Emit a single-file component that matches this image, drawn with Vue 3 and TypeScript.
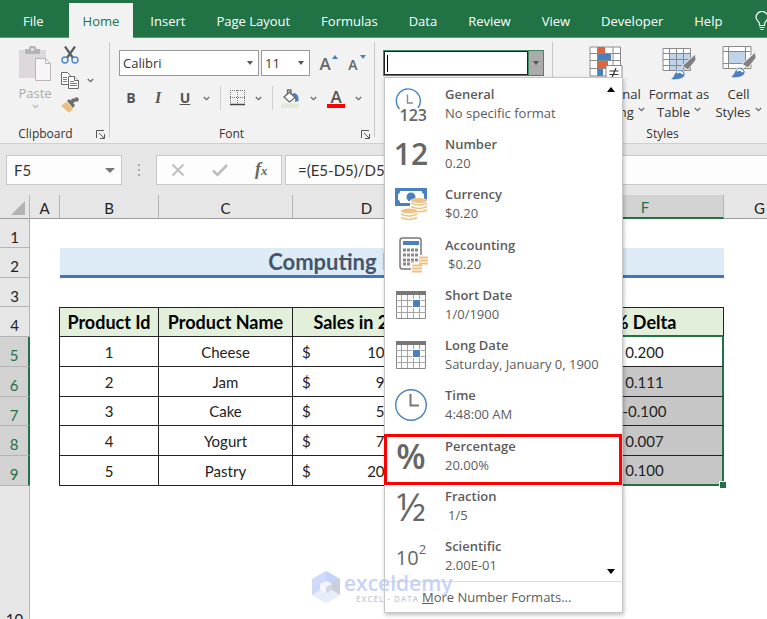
<script setup lang="ts">
interface NumberFormat {
  id: string
  title: string
  sample: string
  indent?: boolean
}

interface ProductRow {
  n: number
  name: string
  before: string
  after: string
  delta: string
  short?: boolean
}

const tabs: string[] = ['File', 'Home', 'Insert', 'Page Layout', 'Formulas', 'Data', 'Review', 'View', 'Developer', 'Help']
const activeTab = 'Home'

const formats: NumberFormat[] = [
  { id: 'general', title: 'General', sample: 'No specific format' },
  { id: 'number', title: 'Number', sample: '0.20' },
  { id: 'currency', title: 'Currency', sample: '$0.20' },
  { id: 'accounting', title: 'Accounting', sample: '$0.20', indent: true },
  { id: 'date', title: 'Short Date', sample: '1/0/1900' },
  { id: 'date', title: 'Long Date', sample: 'Saturday, January 0, 1900' },
  { id: 'time', title: 'Time', sample: '4:48:00 AM' },
  { id: 'percent', title: 'Percentage', sample: '20.00%' },
  { id: 'fraction', title: 'Fraction', sample: '1/5', indent: true },
  { id: 'scientific', title: 'Scientific', sample: '2.00E-01' },
]

const columns: string[] = ['A', 'B', 'C', 'D', 'E', 'F', 'G']

const products: ProductRow[] = [
  { n: 1, name: 'Cheese', before: '10,000.00', after: '12,000.00', delta: '0.200' },
  { n: 2, name: 'Jam', before: '9,000.00', after: '10,000.00', delta: '0.111' },
  { n: 3, name: 'Cake', before: '5,000.00', after: '4,500.00', delta: '-0.100', short: true },
  { n: 4, name: 'Yogurt', before: '7,500.00', after: '7,550.00', delta: '0.007' },
  { n: 5, name: 'Pastry', before: '20,000.00', after: '22,000.00', delta: '0.100' },
]
</script>

<template>
  <div class="app">
    <nav class="tabs" aria-label="Ribbon tabs">
      <button v-for="tab in tabs" :key="tab" type="button" class="tab" :class="{ active: tab === activeTab, file: tab === 'File' }">{{ tab }}</button>
      <button type="button" class="tell-me" aria-label="Tell me">
        <svg width="14" height="20" viewBox="0 0 14 20" fill="none" stroke="#fff" stroke-width="1.2">
          <path d="M4.5 14.5V12.5C4.5 11 1 9.5 1 6.3A6 5.8 0 0 1 13 6.3C13 9.5 9.500 11 9.500 12.500V14.500ZM4.500 16.500H9.500M5.500 18.500H8.500" />
        </svg>
      </button>
    </nav>

    <section class="ribbon">
      <div class="group clipboard">
        <div class="group-body">
          <button type="button" class="paste">
            <svg width="34" height="36" viewBox="0 0 34 36">
              <path d="M1 4H28V32H1Z" fill="#dcd8dc" />
              <path d="M7 8V3H11V1.500Q11 0 13 0H16Q18 0 18 1.500V3H22V8Z" fill="#b4b4b4" />
              <path d="M13 2.500H16V4.500H13Z" fill="#f2f2f2" />
              <path d="M17.500 12.500H27.500L32.500 17.500V34.500H17.500Z" fill="#f7f5f7" stroke="#b9b5b9" />
              <path d="M27.500 12.500V17.500H32.500" fill="none" stroke="#b9b5b9" />
            </svg>
            <span>Paste</span>
            <svg class="chev pale" width="7" height="5" viewBox="0 0 7 5"><path d="M.8 1L3.500 3.700L6.200 1" /></svg>
          </button>
          <div class="clip-tools">
            <button type="button" aria-label="Cut">
              <svg width="18" height="18" viewBox="0 0 18 18" fill="none">
                <path d="M4 .5L12 12M14 .5L6 12" stroke="#5c5c5c" stroke-width="2.200" />
                <circle cx="4" cy="14" r="3" stroke="#4a86c5" stroke-width="1.400" />
                <circle cx="14" cy="14" r="3" stroke="#4a86c5" stroke-width="1.400" />
              </svg>
            </button>
            <button type="button" class="with-chev" aria-label="Copy">
              <svg width="18" height="17" viewBox="0 0 18 17" fill="#fff" stroke="#6a6a6a">
                <path d="M.5.5H6.500L9.500 3.500V12.500H.5Z" />
                <path d="M2 5.500H6M2 7.500H6M2 9.500H6" stroke="#4a86c5" />
                <path d="M7.500 4.500H13.500L17.500 8.500V16.500H7.500Z" />
                <path d="M13.500 4.500V8.500H17.500" />
                <path d="M9 9.500H13M9 11.500H16M9 13.500H16" stroke="#4a86c5" />
              </svg>
              <svg class="chev" width="7" height="5" viewBox="0 0 7 5"><path d="M.8 1L3.500 3.700L6.200 1" /></svg>
            </button>
            <button type="button" aria-label="Format painter">
              <svg width="18" height="17" viewBox="0 0 18 17">
                <path d="M0 8.500L5.500 5L12 11.500L8 16Z" fill="#ecc07c" />
                <path d="M6 4L8 2L14 8L12 11Z" fill="#6e6e6e" />
                <path d="M10 5.500L13.500 2.500" stroke="#6e6e6e" stroke-width="4" />
                <circle cx="15.500" cy="2.500" r="2.300" fill="#6e6e6e" />
              </svg>
            </button>
          </div>
        </div>
        <div class="group-label">Clipboard</div>
        <button type="button" class="launcher" aria-label="Clipboard settings">
          <svg width="9" height="9" viewBox="0 0 9 9" fill="none" stroke="#555"><path d="M.5 8V.5H8M3 3L8 8M8.500 4V8.500H4" /></svg>
        </button>
      </div>

      <div class="group font">
        <div class="font-top">
          <div class="combo family">
            <select aria-label="Font"><option>Calibri</option></select>
            <i class="tri"></i>
          </div>
          <div class="combo size">
            <select aria-label="Font size"><option>11</option></select>
            <i class="tri"></i>
          </div>
          <button type="button" class="grow" aria-label="Increase font size">A<i class="up"></i></button>
          <button type="button" class="grow small" aria-label="Decrease font size">A<i class="down"></i></button>
        </div>
        <div class="font-row">
          <button type="button" class="letter bold">B</button>
          <button type="button" class="letter italic">I</button>
          <button type="button" class="letter under">U</button>
          <svg class="chev" width="7" height="5" viewBox="0 0 7 5"><path d="M.8 1L3.500 3.700L6.200 1" /></svg>
          <i class="sep"></i>
          <button type="button" class="tool" aria-label="Borders">
            <svg width="15" height="16" viewBox="0 0 15 16" fill="none" stroke="#777">
              <path d="M0 .5H15M0 7.500H15M.5 0V14M7.500 0V14M14.500 0V14" stroke-dasharray="1 1" />
              <path d="M0 14.500H15" stroke="#444" stroke-width="1.500" />
            </svg>
            <svg class="chev" width="7" height="5" viewBox="0 0 7 5"><path d="M.8 1L3.500 3.700L6.200 1" /></svg>
          </button>
          <i class="sep"></i>
          <button type="button" class="tool" aria-label="Fill colour">
            <svg width="19" height="19" viewBox="0 0 19 19" fill="none">
              <path d="M0 14.500H18V19H0Z" fill="#dfecd8" />
              <path d="M12 4Q18 4 17.500 12L14 13Q15 8 12 6Z" fill="#4a7ebb" />
              <path d="M8.500 3L14 8.500L8.500 13L3 8Z" fill="#fff" stroke="#6a6a6a" stroke-width="1.300" />
              <path d="M6.500 6V1H10V6" stroke="#6a6a6a" stroke-width="1.300" />
            </svg>
            <svg class="chev" width="7" height="5" viewBox="0 0 7 5"><path d="M.8 1L3.500 3.700L6.200 1" /></svg>
          </button>
          <button type="button" class="tool font-colour" aria-label="Font colour">
            <span>A</span>
            <svg class="chev" width="7" height="5" viewBox="0 0 7 5"><path d="M.8 1L3.500 3.700L6.200 1" /></svg>
          </button>
        </div>
        <div class="group-label">Font</div>
        <button type="button" class="launcher" aria-label="Font settings">
          <svg width="9" height="9" viewBox="0 0 9 9" fill="none" stroke="#555"><path d="M.5 8V.5H8M3 3L8 8M8.500 4V8.500H4" /></svg>
        </button>
      </div>

      <div class="group number">
        <div class="format-box">
          <input type="text" aria-label="Number format" />
          <i class="caret"></i>
          <button type="button" aria-label="Open number formats"><i class="tri"></i></button>

          <div class="menu">
            <i class="scroll-up"></i>
            <ul>
              <li v-for="f in formats" :key="f.title">
                <button type="button" class="format" :class="{ marked: f.id === 'percent' }">
                  <span class="icon" :class="f.id">
                    <template v-if="f.id === 'general'">
                      <svg width="32" height="32" viewBox="0 0 32 32" fill="none">
                        <path d="M4.500 21A12 12 0 1 1 23 20" stroke="#4a86c5" stroke-width="1.400" />
                        <path d="M12.500 6.500V15H18" stroke="#8a8a8a" stroke-width="1.400" />
                      </svg>
                      <b>123</b>
                    </template>
                    <template v-else-if="f.id === 'number'">12</template>
                    <svg v-else-if="f.id === 'currency'" width="33" height="34" viewBox="0 0 33 34">
                      <path d="M0 1H32V19H0Z" fill="#4a80bb" />
                      <path d="M5 4H27Q27 7 29 7V13Q27 13 27 16H5Q5 13 3 13V7Q5 7 5 4Z" fill="#fff" />
                      <circle cx="16" cy="10" r="4.500" fill="#4a80bb" />
                      <path d="M15 13Q24 8 33 13V29H23V34H5V24Q9 20 15 21Z" fill="#fff" />
                      <ellipse cx="24" cy="13.500" rx="8" ry="2.500" fill="#edc283" />
                      <path d="M16 16Q24 20 32 16M16 19.500Q24 23.500 32 19.500M21 24.500Q27 25.500 32 23" fill="none" stroke="#edc283" stroke-width="1.600" />
                      <ellipse cx="14" cy="24" rx="8" ry="2.500" fill="#edc283" />
                      <path d="M6 27Q14 31 22 27M6 30.500Q14 34.500 22 30.500" fill="none" stroke="#edc283" stroke-width="1.600" />
                    </svg>
                    <svg v-else-if="f.id === 'accounting'" width="33" height="36" viewBox="0 0 33 36">
                      <rect x="5" y="1" width="21" height="31" rx="2.500" fill="#fff" stroke="#777" stroke-width="1.500" />
                      <path d="M8 4H24V8H8Z" fill="#4a80bb" />
                      <path d="M8 13H24M8 18H24M8 23H24M8 27H20" stroke="#8a8a8a" stroke-width="3" stroke-dasharray="3 1" />
                      <path d="M23 18H34V30H27V36H16V26H23Z" fill="#fff" />
                      <path d="M24 20.500H34M24 23.500H34M24 26.500H34M17 28.500H27M17 31.500H27M17 34.500H27" stroke="#edc283" stroke-width="2" />
                    </svg>
                    <svg v-else-if="f.id === 'date'" width="30" height="28" viewBox="0 0 30 28" fill="none">
                      <path d="M.5.5H29.500V27.500H.5Z" fill="#fff" stroke="#8a8a8a" />
                      <path d="M0 0H30V4H0Z" fill="#777" />
                      <path d="M5.500 4V27M11.500 4V27M17.500 4V27M23.500 4V27M0 9.500H30M0 15.500H30M0 21.500H30" stroke="#a5a5a5" />
                      <path d="M16 8H25V17H16Z" fill="#fff" />
                      <path d="M17 9H24V16H17Z" fill="#4a80bb" />
                    </svg>
                    <svg v-else-if="f.id === 'time'" width="32" height="34" viewBox="0 0 32 34" fill="none">
                      <circle cx="16" cy="17" r="15.300" stroke="#4a80bb" stroke-width="1.400" />
                      <path d="M15.500 6V17.500H24" stroke="#777" stroke-width="2" />
                    </svg>
                    <template v-else-if="f.id === 'percent'">%</template>
                    <template v-else-if="f.id === 'fraction'">½</template>
                    <template v-else>10<sup>2</sup></template>
                  </span>
                  <span class="text">
                    <strong>{{ f.title }}</strong>
                    <span :class="{ indent: f.indent }">{{ f.sample }}</span>
                  </span>
                </button>
              </li>
            </ul>
            <i class="scroll-down"></i>
            <button type="button" class="more"><u>M</u>ore Number Formats...</button>
          </div>
        </div>
      </div>

      <div class="group styles">
        <div class="style-buttons">
          <button type="button" class="style conditional">
            <svg width="34" height="34" viewBox="0 0 34 34" fill="none">
              <path d="M.5.500H32V30.500H.5Z" fill="#fff" />
              <path d="M9 1H16V7H9ZM9 15H19V22H9Z" fill="#dc6440" />
              <path d="M9 8H22V14H9ZM9 23H14V30H9Z" fill="#4a80bb" />
              <path d="M1 1H31.500V30H1ZM8.500 1V30M24 1V30M1 7.500H31M1 14.500H31M1 22.500H31" stroke="#8a8a8a" />
              <path d="M17 19.500H33V33.500H17Z" fill="#fff" stroke="#8a8a8a" />
              <path d="M20.500 25H29.500M20.500 28.500H29.500M27 22L23 31.500" stroke="#333" stroke-width="1.200" />
            </svg>
            <span>Conditional</span>
            <span>Formatting <svg class="chev" width="7" height="5" viewBox="0 0 7 5"><path d="M.8 1L3.500 3.700L6.200 1" /></svg></span>
          </button>
          <button type="button" class="style table">
            <svg width="34" height="34" viewBox="0 0 34 34" fill="none">
              <path d="M.5 2.500H28.500V24.500H.5Z" fill="#fff" />
              <path d="M8 8H28V24H8Z" fill="#bfd3ea" />
              <path d="M1 2.500H28.500V24.500H1ZM7.500 2V24M14.500 2V24M21.500 2V24M1 7.500H28M1 13.500H28M1 19.500H28" stroke="#8a8a8a" />
              <path d="M33.500 8L34 14L26 24L20 20Z" fill="#808080" stroke="#f2f2f2" />
              <path d="M8 33.500Q11 32 13 27Q16 22 20 23.500Q25 27 22 31Q17 35 8 33.500Z" fill="#4a80bb" stroke="#f2f2f2" />
              <path d="M15 27Q18 24 21 28" stroke="#fff" stroke-width="2" />
            </svg>
            <span>Format as</span>
            <span>Table <svg class="chev" width="7" height="5" viewBox="0 0 7 5"><path d="M.8 1L3.500 3.700L6.200 1" /></svg></span>
          </button>
          <button type="button" class="style cell">
            <svg width="34" height="34" viewBox="0 0 34 34" fill="none">
              <path d="M.5.500H29V22.500H.5Z" fill="#fff" />
              <path d="M1 .5H29V22.500H1ZM6.500 0V22M23.500 0V22M1 5.500H28M1 17.500H28" stroke="#8a8a8a" />
              <path d="M7 6H23V17H7Z" fill="#bfd3ea" />
              <path d="M33.500 6L34 12L26 22L20 18Z" fill="#808080" stroke="#f2f2f2" />
              <path d="M8 31.500Q11 30 13 25Q16 20 20 21.500Q25 25 22 29Q17 33 8 31.500Z" fill="#4a80bb" stroke="#f2f2f2" />
              <path d="M15 25Q18 22 21 26" stroke="#fff" stroke-width="2" />
            </svg>
            <span>Cell</span>
            <span>Styles <svg class="chev" width="7" height="5" viewBox="0 0 7 5"><path d="M.8 1L3.500 3.700L6.200 1" /></svg></span>
          </button>
        </div>
        <div class="group-label">Styles</div>
      </div>
    </section>

    <section class="formula-bar">
      <div class="name-box">
        <input type="text" value="F5" aria-label="Name box" />
        <i class="tri wide"></i>
      </div>
      <svg class="grip" width="4" height="14" viewBox="0 0 4 14" fill="#a8a8a8"><path d="M1 1H3V3H1ZM1 6H3V8H1ZM1 11H3V13H1Z" /></svg>
      <div class="entry-tools">
        <button type="button" aria-label="Cancel"><svg width="14" height="14" viewBox="0 0 14 14" fill="none" stroke="#bdbdbd" stroke-width="1.800"><path d="M1.500 1.500L12.500 12.500M12.500 1.500L1.500 12.500" /></svg></button>
        <button type="button" aria-label="Enter"><svg width="16" height="14" viewBox="0 0 16 14" fill="none" stroke="#bdbdbd" stroke-width="2.600"><path d="M1 7.500L5.500 12L15 2" /></svg></button>
        <button type="button" class="fx" aria-label="Insert function">f<small>x</small></button>
      </div>
      <input class="formula" type="text" value="=(E5-D5)/D5" aria-label="Formula" />
    </section>

    <main class="sheet">
      <table>
        <colgroup>
          <col class="w-head" /><col class="w-a" /><col class="w-b" /><col class="w-c" /><col class="w-d" /><col class="w-e" /><col class="w-f" /><col class="w-g" />
        </colgroup>
        <thead>
          <tr>
            <th class="corner"><svg width="14" height="14" viewBox="0 0 14 14"><path d="M14 0V14H0Z" fill="#b2b2b2" /></svg></th>
            <th v-for="c in columns" :key="c" :class="{ picked: c === 'F' }">{{ c }}</th>
          </tr>
        </thead>
        <tbody>
          <tr class="short"><th>1</th><td colspan="7"></td></tr>
          <tr><th>2</th><td></td><td class="title" colspan="5">Computing Percent Delta</td><td></td></tr>
          <tr class="short"><th>3</th><td colspan="7"></td></tr>
          <tr class="heads">
            <th>4</th><td class="edge"></td><td>Product Id</td><td>Product Name</td><td>Sales in 2020</td><td>Sales in 2021</td><td>% Delta</td><td class="blank"></td>
          </tr>
          <tr v-for="p in products" :key="p.n" class="data" :class="{ short: p.short }">
            <th class="picked">{{ p.n + 4 }}</th>
            <td class="edge"></td>
            <td>{{ p.n }}</td>
            <td>{{ p.name }}</td>
            <td><span class="money"><span>$</span><span>{{ p.before }}</span></span></td>
            <td><span class="money"><span>$</span><span>{{ p.after }}</span></span></td>
            <td class="delta">{{ p.delta }}<i v-if="p.n === 5" class="handle"></i></td>
            <td class="blank"></td>
          </tr>
          <tr class="tall"><th>10</th><td colspan="7"></td></tr>
        </tbody>
      </table>
    </main>

    <div class="watermark">
      <svg width="28" height="32" viewBox="0 0 28 32">
        <path d="M14 0L28 8V24L14 32L0 24V8Z" fill="#c3d2fb" />
        <path d="M14 0L28 8V24L20 19V12L14 9Z" fill="#b7c9f8" />
        <path d="M28 8V24L20 20V12Z" fill="#bfc3d4" />
        <path d="M0 24L8 19L14 22L20 19L28 24L14 32Z" fill="#e2eaf6" />
        <path d="M14 10L20 13V19L14 22L8 19V13Z" fill="#f2f5fc" />
        <path d="M14 16L20 13V19L14 22Z" fill="#c9cede" />
      </svg>
      <div><b>exceldemy</b><small>EXCEL - DATA</small></div>
    </div>
  </div>
</template>

<style>
body {
  margin: 0;
  background: #fff;
  overflow: hidden;
}
</style>

<style scoped>
.app {
  position: relative;
  display: flex;
  flex-direction: column;
  height: 100vh;
  overflow: hidden;
  font: 13px/16px "Open Sans", "Noto Sans", sans-serif;
  color: #333;
}

.app *,
.app *::after {
  box-sizing: border-box;
}

button,
input,
select {
  margin: 0;
  padding: 0;
  border: 0;
  background: none;
  color: inherit;
  font: inherit;
  outline: none;
}

svg {
  display: block;
  flex: none;
}

/* Tabs */
.tabs {
  display: flex;
  flex: none;
  align-items: flex-end;
  gap: 3px;
  height: 38px;
  padding-left: 9px;
  background: #217346;
  border-bottom: 1px solid #5d9c78;
  color: #fff;
}

.tab {
  flex: none;
  height: 34px;
  padding: 1px 14px 0;
  white-space: nowrap;
}

.tab.file {
  margin-right: 8px;
}

.tab.active {
  height: 35px;
  margin-bottom: -1px;
  background: #f2f2f2;
  color: #217346;
}

.tell-me {
  margin: 0 0 6px 16px;
}

/* Ribbon */
.ribbon {
  display: flex;
  flex: none;
  height: 106px;
  background: #f2f2f2;
  border-bottom: 1px solid #cfcfcf;
}

.group {
  position: relative;
  display: flex;
  flex: none;
  flex-direction: column;
  padding-top: 8px;
}

.group:not(.styles)::after {
  content: "";
  position: absolute;
  top: 4px;
  right: 0;
  bottom: 6px;
  width: 1px;
  background: #c8c8c8;
}

.group-label {
  margin-top: auto;
  padding-bottom: 1px;
  font-size: 12px;
  line-height: 16px;
  text-align: center;
  color: #333;
}

.launcher {
  position: absolute;
  right: 5px;
  bottom: 4px;
}

.chev {
  fill: none;
  stroke: #666;
  stroke-width: 1.2;
}

.chev.pale {
  stroke: #b5b5b5;
}

.tri {
  width: 0;
  border: 3px solid transparent;
  border-top: 4px solid #555;
  border-bottom: 0;
}

.tri.wide {
  border-width: 5px 5px 0;
  border-top-color: #777;
}

.clipboard {
  width: 110px;
}

.clipboard .group-label {
  padding-right: 19px;
}

.group-body {
  display: flex;
  gap: 8px;
  padding-left: 17px;
}

.paste {
  display: flex;
  flex-direction: column;
  align-items: center;
  gap: 3px;
  width: 36px;
  color: #aaa;
}

.clip-tools {
  display: flex;
  flex-direction: column;
  gap: 8px;
}

.with-chev {
  display: flex;
  align-items: center;
  gap: 8px;
}

.font {
  width: 265px;
  padding: 12px 0 0 9px;
}

.font .group-label {
  padding-right: 31px;
}

.font-top {
  display: flex;
  gap: 2px;
}

.combo {
  display: flex;
  align-items: center;
  height: 26px;
  padding-right: 5px;
  background: #fff;
  border: 1px solid #999;
}

.combo select {
  flex: 1;
  min-width: 0;
  padding-left: 3px;
  appearance: none;
}

.family {
  width: 140px;
}

.size {
  width: 49px;
}

.grow {
  position: relative;
  width: 26px;
  padding-top: 2px;
  font-size: 17px;
  font-weight: 600;
  color: #666;
}

.grow.small {
  padding-top: 4px;
  font-size: 14px;
}

.grow i {
  position: absolute;
  top: 5px;
  right: 0;
  border: 3px solid transparent;
}

.grow .up {
  border-top: 0;
  border-bottom: 4px solid #4a80bb;
}

.grow .down {
  border-bottom: 0;
  border-top: 4px solid #4a80bb;
}

.font-row {
  display: flex;
  align-items: center;
  height: 24px;
  margin-top: 10px;
}

.letter {
  flex: none;
  width: 28px;
  margin-right: -1px;
  padding-right: 4px;
  font-size: 14px;
  font-weight: 700;
  color: #555;
}

.under + .chev {
  margin-left: 3px;
}

.italic {
  font-family: "Liberation Serif", serif;
  font-style: italic;
  font-size: 16px;
}

.under {
  text-decoration: underline;
}

.sep {
  width: 1px;
  height: 24px;
  margin: 0 9px 0 10px;
  background: #d0d0d0;
}

.tool {
  display: flex;
  align-items: center;
  gap: 10px;
}

.tool + .sep {
  margin-right: 8px;
}

.font-colour {
  margin-left: 10px;
}

.font-colour span {
  width: 18px;
  border-bottom: 4px solid #f00;
  font-size: 17px;
  font-weight: 600;
  line-height: 15px;
  color: #555;
}

.number {
  width: 178px;
  padding: 12px 9px 0 8px;
}

.format-box {
  position: relative;
  display: flex;
  height: 26px;
  border: 1px solid #3f8a60;
}

.format-box > input {
  flex: 1;
  min-width: 0;
  background: #fff;
  border: 1px solid #222;
}

.format-box > button {
  display: grid;
  place-items: center;
  width: 15px;
  background: #ababab;
  border-left: 1px solid #3f8a60;
}

.caret {
  position: absolute;
  top: 4px;
  left: 3px;
  width: 1px;
  height: 17px;
  background: #000;
}

.styles {
  flex: 1;
  min-width: 214px;
}

.styles .group-label {
  width: 219px;
}

.style-buttons {
  display: flex;
  padding-left: 12px;
}

.style {
  display: flex;
  flex: none;
  flex-direction: column;
  align-items: center;
  width: 64px;
  white-space: nowrap;
}

.style.conditional {
  width: 82px;
}

.style svg:first-child {
  margin-bottom: 5px;
}

.style span {
  display: flex;
  align-items: center;
  gap: 4px;
  line-height: 18px;
}

.style.cell {
  width: 55px;
}

/* Number format menu */
.menu {
  position: absolute;
  z-index: 5;
  top: 26px;
  left: 0;
  width: 239px;
  background: #fff;
  border: 1px solid #c6c6c6;
  box-shadow: 1px 2px 4px rgba(0, 0, 0, 0.25);
  color: #5c5c5c;
}

.menu ul {
  display: flex;
  flex-direction: column;
  justify-content: space-between;
  height: 503px;
  margin: 0;
  padding: 1px 0 0;
  list-style: none;
}

.format {
  position: relative;
  display: flex;
  align-items: center;
  gap: 18px;
  width: 100%;
  height: 50px;
  padding-left: 10px;
  text-align: left;
}

.marked::after {
  content: "";
  position: absolute;
  inset: 3px 0 -4px -1px;
  border: 3px solid #f00;
}

.icon {
  position: relative;
  display: grid;
  flex: none;
  place-items: center;
  width: 32px;
  height: 36px;
  color: #666;
  white-space: nowrap;
}

.icon b {
  position: absolute;
  right: 0;
  bottom: 0;
  background: #fff;
  font-size: 16px;
  font-weight: 600;
  line-height: 14px;
}

.icon.number,
.icon.percent {
  padding: 0;
  font-size: 30px;
  font-weight: 600;
  place-content: center;
}

.icon.percent {
  font-size: 34px;
}

.icon.fraction {
  place-content: center;
  font-size: 38px;
}

.icon.scientific {
  display: flex;
  justify-content: center;
  padding-top: 4px;
  font-size: 20px;
}

.icon sup {
  align-self: flex-start;
  font-size: 13px;
  line-height: 14px;
}

.text {
  display: flex;
  flex-direction: column;
  line-height: 19px;
}

.text strong {
  font-weight: 600;
}

.indent {
  padding-left: 3px;
}

.scroll-up,
.scroll-down {
  position: absolute;
  right: 7px;
  border: 4px solid transparent;
}

.scroll-up {
  top: 9px;
  border-top: 0;
  border-bottom: 5px solid #000;
}

.scroll-down {
  bottom: 38px;
  border-bottom: 0;
  border-top: 5px solid #000;
}

.more {
  display: block;
  width: 100%;
  height: 31px;
  padding-left: 37px;
  border-top: 1px solid #dcdcdc;
  text-align: left;
}

/* Formula bar */
.formula-bar {
  display: flex;
  flex: none;
  align-items: center;
  height: 51px;
  padding: 1px 0 0 6px;
  background: #e6e6e6;
  font-family: Lato, sans-serif;
  font-size: 15px;
}

.name-box,
.entry-tools,
.formula {
  display: flex;
  align-items: center;
  height: 30px;
  background: #fdfdfd;
  border: 1px solid #c8c8c8;
}

.name-box {
  width: 116px;
  padding: 0 6px 0 7px;
}

.name-box input {
  flex: 1;
  min-width: 0;
}

.grip {
  margin: 0 15px;
}

.entry-tools {
  justify-content: space-around;
  width: 126px;
}

.fx {
  font: italic 700 18px/18px "Liberation Serif", serif;
  color: #666;
}

.fx small {
  font-size: 13px;
}

.formula {
  flex: 1;
  min-width: 0;
  margin-left: 3px;
  padding-left: 12px;
  border-right: 0;
}

/* Sheet */
.sheet {
  flex: 1;
  min-height: 0;
  overflow: hidden;
  background: #fff;
  font-family: Lato, sans-serif;
  font-size: 15px;
  color: #222;
}

table {
  width: 796px;
  table-layout: fixed;
  border-collapse: separate;
  border-spacing: 0;
}

.w-head,
.w-a {
  width: 30px;
}

.w-b {
  width: 99px;
}

.w-c {
  width: 134px;
}

.w-d {
  width: 148px;
}

.w-e {
  width: 126px;
}

.w-f {
  width: 157px;
}

.w-g {
  width: 72px;
}

th,
td {
  height: 30px;
  padding: 0;
  text-align: center;
  white-space: nowrap;
}

.short th,
.short td {
  height: 29px;
}

th {
  background: #e6e6e6;
  border-right: 1px solid #b4b4b4;
  border-bottom: 1px solid #b4b4b4;
  font-weight: 400;
}

thead th {
  height: 24px;
  padding-top: 2px;
  border-bottom-color: #9c9c9c;
}

tbody th {
  padding-top: 7px;
}

th.picked {
  background: #d2d2d2;
  color: #217346;
}

thead .picked {
  border-bottom: 2px solid #217346;
}

tbody .picked {
  border-right: 2px solid #217346;
}

.corner svg {
  margin-left: 11px;
}

.title {
  background: #ddebf7;
  border-bottom: 3px solid #4472c4;
  font-size: 22px;
  line-height: 26px;
  font-weight: 700;
  color: #44546a;
}

.heads td,
.data td {
  border-right: 1px solid #222;
  border-bottom: 1px solid #222;
}

.heads td {
  background: #e2efda;
  border-top: 1px solid #222;
  font-size: 18px;
  font-weight: 700;
  color: #000;
}

.heads td:nth-child(7) {
  border-bottom: 2px solid #217346;
}

.heads .edge,
.data .edge,
.heads .blank,
.data .blank {
  background: none;
  border-top: 0;
  border-bottom: 0;
}

.heads .blank,
.data .blank {
  border-right: 0;
}

.money {
  display: flex;
  justify-content: space-between;
  padding: 0 5px 0 9px;
}

.data .delta {
  position: relative;
  background: #c6c6c6;
  border-right: 2px solid #217346;
}

.data:nth-child(5) .delta {
  background: #fff;
}

.data:nth-child(9) .delta {
  border-bottom: 2px solid #217346;
}

.handle {
  position: absolute;
  right: -4px;
  bottom: -4px;
  width: 7px;
  height: 7px;
  background: #217346;
  border: solid #fff;
  border-width: 1px 0 0 1px;
}

.tall th {
  height: 142px;
  padding-bottom: 0;
  vertical-align: bottom;
}

/* Watermark */
.watermark {
  position: absolute;
  z-index: 9;
  top: 571px;
  left: 312px;
  display: flex;
  gap: 4px;
  opacity: 0.8;
  pointer-events: none;
}

.watermark div {
  display: flex;
  flex-direction: column;
}

.watermark b {
  font: 600 21px/24px "Open Sans", sans-serif;
  color: #b9c8f6;
}

.watermark small {
  padding-left: 12px;
  font: 600 8px/8px "Open Sans", sans-serif;
  letter-spacing: 1px;
  color: #b9c0cc;
}
</style>
